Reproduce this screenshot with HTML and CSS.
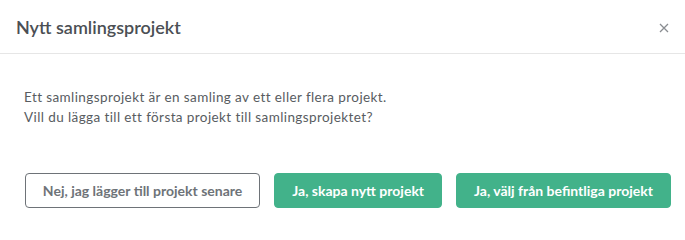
FILE: index.html
```html
<!DOCTYPE html>
<html lang="sv">
<head>
<meta charset="utf-8">
<title>Nytt samlingsprojekt</title>
<link rel="stylesheet" href="styles.css">
</head>
<body>
<div class="modal">
  <div class="modal-header">
    <h2 class="modal-title">Nytt samlingsprojekt</h2>
    <button class="close" aria-label="Stäng">
      <svg width="10" height="10" viewBox="0 0 10 10"><path d="M1 1 L9 9 M9 1 L1 9" stroke="#8a8d91" stroke-width="1.3" fill="none"/></svg>
    </button>
  </div>
  <div class="modal-body">
    <p>Ett samlingsprojekt är en samling av ett eller flera projekt.</p>
    <p>Vill du lägga till ett första projekt till samlingsprojektet?</p>
  </div>
  <div class="modal-footer">
    <button class="btn btn-outline">Nej, jag lägger till projekt senare</button>
    <button class="btn btn-primary">Ja, skapa nytt projekt</button>
    <button class="btn btn-primary">Ja, välj från befintliga projekt</button>
  </div>
</div>
</body>
</html>
```
FILE: styles.css
```css
html, body {
  margin: 0;
  padding: 0;
  background: #ffffff;
}
body {
  font-family: Lato, "Liberation Sans", sans-serif;
  width: 685px;
  height: 224px;
  overflow: hidden;
}
.modal {
  display: flex;
  flex-direction: column;
}
.modal-header {
  display: flex;
  align-items: center;
  justify-content: space-between;
  height: 54px;
  padding: 0 16px;
  border-bottom: 1px solid #e6e6e6;
  box-sizing: border-box;
}
.modal-title {
  margin: 0;
  font-size: 18px;
  font-weight: 600;
  color: #4b4f54;
}
.close {
  border: 0;
  background: none;
  padding: 0;
  display: flex;
  margin-top: 2px;
}
.modal-body {
  padding: 33px 24px 0;
}
.modal-body p {
  margin: 0;
  font-size: 13.5px;
  letter-spacing: 0.4px;
  line-height: 20px;
  color: #585c61;
}
.modal-footer {
  display: flex;
  justify-content: flex-end;
  gap: 14px;
  padding: 46px 14px 0 24px;
}
.btn {
  font-family: inherit;
  font-size: 14px;
  font-weight: 700;
  height: 35px;
  padding: 0 17px;
  border-radius: 4px;
  cursor: pointer;
  box-sizing: border-box;
}
.btn-outline {
  background: #fff;
  border: 1px solid #6e7378;
  color: #6e7378;
}
.btn-primary {
  background: #42b28a;
  border: 1px solid #42b28a;
  color: #fff;
}
```
